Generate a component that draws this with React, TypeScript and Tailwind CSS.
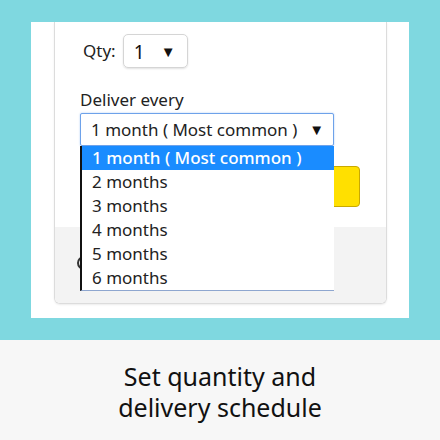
const options = ["1 month ( Most common )", "2 months", "3 months", "4 months", "5 months", "6 months"]

function Caret() {
  return <span className="text-[15px] leading-none text-[#111]">▼</span>
}

export default function App() {
  return (
    <div className="w-[440px] h-[440px] overflow-hidden font-['Noto_Sans',sans-serif] text-[#111]">
      <div className="h-[340px] bg-[#7fd8e0] pt-[22px] px-[31px]">
        <div className="h-[296px] bg-white overflow-hidden">
          <div className="ml-[23px] w-[333px] h-[282px] border-x border-b border-[#dcdcdc] rounded-b-[6px] overflow-hidden shadow-[0_1px_2px_rgba(0,0,0,0.08)]">
            <div className="h-[205px] bg-white pl-[25px] pt-[12px]">
              <div className="flex items-center gap-[7px] h-[34px]">
                <span className="ml-[3px] text-[17px] text-[#222]">Qty:</span>
                <div className="w-[65px] h-[34px] border border-[#d5d5d5] rounded-[5px] shadow-[0_1px_2px_rgba(0,0,0,0.12)] flex items-center justify-between pl-[10px] pr-[11px]">
                  <span className="text-[19px] pt-[2px]">1</span>
                  <Caret />
                </div>
              </div>
              <div className="mt-[22px] text-[17px] leading-[20px] text-[#222]">Deliver every</div>
              <div className="relative mt-[3px] w-[254px] z-10">
                <div className="h-[33px] border border-[#6ea2ea] rounded-[2px] shadow-[0_0_2px_#a9c8f2] flex items-center justify-between pl-[10px] pr-[9px] bg-white">
                  <span className="text-[17px] text-[#222]">1 month ( Most common )</span>
                  <Caret />
                </div>
                <ul className="absolute top-full left-0 w-full bg-white border-l-2 border-l-[#111] border-b border-b-[#8ea6cf]">
                  {options.map((o, i) => (
                    <li
                      key={o}
                      className={
                        i === 0
                          ? "h-[24px] flex items-center pl-[10px] text-[17px] font-medium bg-[#1a8cff] text-white"
                          : "h-[24px] flex items-center pl-[10px] text-[17px] text-[#222]"
                      }
                    >
                      {o}
                    </li>
                  ))}
                </ul>
              </div>
              <div className="mt-[20px] w-[280px] h-[41px] bg-[#ffe000] border border-[#c9a900] rounded-[4px]" />
            </div>
            <div className="h-[77px] bg-[#f3f3f3] pl-[22px] pt-[29px]">
              <div className="w-[14px] h-[14px] rounded-full border-2 border-[#333]" />
            </div>
          </div>
        </div>
      </div>
      <div className="h-[100px] bg-[#f7f7f7] flex flex-col items-center justify-center pt-[3px] text-[25px] leading-[31px] text-[#111]">
        <span>Set quantity and</span>
        <span>delivery schedule</span>
      </div>
    </div>
  )
}
